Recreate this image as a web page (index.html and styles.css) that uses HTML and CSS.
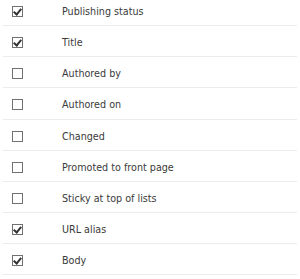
FILE: index.html
```html
<!DOCTYPE html>
<html lang="en">
<head>
    <meta charset="UTF-8">
    <title>Display fields</title>
    <link rel="stylesheet" href="styles.css">
</head>
<body>
    <div class="field-list">
        <div class="field-row">
            <span class="check checked"></span>
            <span class="field-label">Publishing status</span>
        </div>
        <div class="field-row">
            <span class="check checked"></span>
            <span class="field-label">Title</span>
        </div>
        <div class="field-row">
            <span class="check"></span>
            <span class="field-label">Authored by</span>
        </div>
        <div class="field-row">
            <span class="check"></span>
            <span class="field-label">Authored on</span>
        </div>
        <div class="field-row">
            <span class="check"></span>
            <span class="field-label">Changed</span>
        </div>
        <div class="field-row">
            <span class="check"></span>
            <span class="field-label">Promoted to front page</span>
        </div>
        <div class="field-row">
            <span class="check"></span>
            <span class="field-label">Sticky at top of lists</span>
        </div>
        <div class="field-row">
            <span class="check checked"></span>
            <span class="field-label">URL alias</span>
        </div>
        <div class="field-row">
            <span class="check checked"></span>
            <span class="field-label">Body</span>
        </div>
    </div>
</body>
</html>
```

FILE: styles.css
```css
* {
    margin: 0;
    padding: 0;
    box-sizing: border-box;
}

body {
    font-family: 'DejaVu Sans', sans-serif;
    font-size: 9.6px;
    color: #3a3a3a;
    background: #FFFFFF;
}

.field-list {
    width: 294px;
    margin: -5px 0 0 3px;
}

.field-row {
    display: flex;
    align-items: center;
    height: 31.125px;
    padding-top: 3px;
    border-bottom: 1px solid #ececec;
}

.check {
    position: relative;
    width: 11px;
    height: 11px;
    margin-left: 9px;
    margin-right: 39px;
    border: 1px solid #707070;
    background: #FFFFFF;
    flex-shrink: 0;
}

/* check mark */
.check.checked::after {
    content: '';
    position: absolute;
    left: 2px;
    top: 0;
    width: 3px;
    height: 6px;
    border-right: 2px solid #333333;
    border-bottom: 2px solid #333333;
    transform: rotate(40deg);
}

.field-label {
    white-space: nowrap;
}
```
